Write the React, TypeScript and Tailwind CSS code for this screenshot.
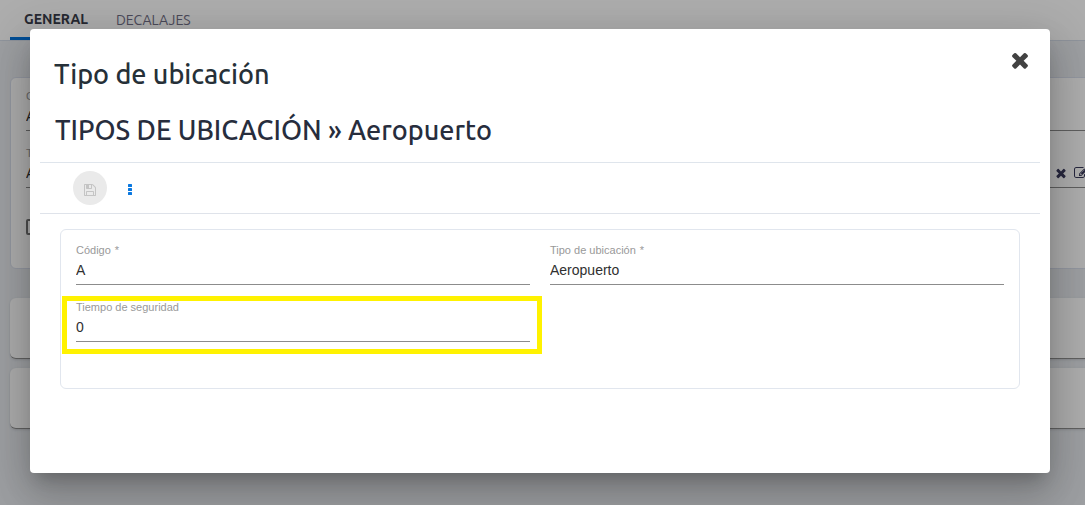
import { useState } from "react";

interface FieldProps {
  id: string;
  label: string;
  value: string;
  required?: boolean;
  children?: React.ReactNode;
}

interface IconProps {
  path: string;
  className?: string;
}

const icons = {
  times:
    "M1490 1322q0 40-28 68l-136 136q-28 28-68 28t-68-28l-294-294-294 294q-28 28-68 28t-68-28l-136-136q-28-28-28-68t28-68l294-294-294-294q-28-28-28-68t28-68l136-136q28-28 68-28t68 28l294 294 294-294q28-28 68-28t68 28l136 136q28 28 28 68t-28 68l-294 294 294 294q28 28 28 68z",
  save: "M512 1536h768v-384h-768v384zm896 0h128v-896q0-14-10-38.5t-20-34.5l-281-281q-10-10-34-20t-39-10v416q0 40-28 68t-68 28h-576q-40 0-68-28t-28-68v-416h-128v1280h128v-416q0-40 28-68t68-28h832q40 0 68 28t28 68v416zm-384-928v-320q0-13-9.5-22.5t-22.5-9.5h-192q-13 0-22.5 9.5t-9.5 22.5v320q0 13 9.5 22.5t22.5 9.5h192q13 0 22.5-9.5t9.5-22.5zm640 32v928q0 40-28 68t-68 28h-1344q-40 0-68-28t-28-68v-1344q0-40 28-68t68-28h928q40 0 88 20t76 48l280 280q28 28 48 76t20 88z",
  edit: "M888 1184l116-116-152-152-116 116v56h96v96h56zm440-720q-16-16-33 1l-350 350q-17 17-1 33t33-1l350-350q17-17 1-33zm80 594v190q0 119-84.5 203.5t-203.5 84.5h-832q-119 0-203.5-84.5t-84.5-203.5v-832q0-119 84.5-203.5t203.5-84.5h832q63 0 117 25 15 7 18 23 3 17-9 29l-49 49q-14 14-32 8-23-6-45-6h-832q-66 0-113 47t-47 113v832q0 66 47 113t113 47h832q66 0 113-47t47-113v-126q0-13 9-22l64-64q15-15 35-7t20 29zm-96-738l288 288-672 672h-288v-288zm444 132l-92 92-288-288 92-92q28-28 68-28t68 28l152 152q28 28 28 68t-28 68z",
};

function Icon({ path, className }: IconProps) {
  return (
    <svg viewBox="0 0 1792 1792" fill="currentColor" className={className} aria-hidden="true">
      <path d={path} />
    </svg>
  );
}

function Field({ id, label, value, required, children }: FieldProps) {
  const [text, setText] = useState(value);

  return (
    <div className="relative flex flex-col font-['Liberation_Sans',Arial,sans-serif]">
      <label htmlFor={id} className="text-[11px] leading-3 text-[#999999]">
        {label}
        {required && <span className="ml-1">*</span>}
      </label>
      <div className="flex items-center gap-1.5 border-b border-[#8c8c8c] pt-1 pb-1">
        <input
          id={id}
          value={text}
          onChange={(e) => setText(e.target.value)}
          className="h-5 min-w-0 flex-1 bg-transparent text-sm leading-5 text-[#303030] outline-none"
        />
        {children}
      </div>
    </div>
  );
}

// Page behind the dialog, wider than the window and cut at its right edge
function LocationPage() {
  return (
    <div className="w-[calc(100%+32px)]">
      <nav className="flex h-[41px] border-b border-[#d3dbe6] bg-white pl-2.5 text-sm">
        <button className="border-b-3 border-[#0073dd] px-3.5 font-bold text-[#3a3d4a]">GENERAL</button>
        <button className="px-3.5 text-[#6f6d84]">DECALAJES</button>
      </nav>

      <main className="flex flex-col pt-9 pl-2.5">
        <section className="flex h-48 flex-col gap-4 rounded-md border border-[#d9dfec] bg-white pt-3 pr-7 pl-[15px]">
          <Field id="page-code" label="Código" value="A" required />
          <Field id="page-type" label="Tipo de ubicación" value="Aeropuerto" required>
            <button aria-label="Borrar" className="text-[#3a3a5c]">
              <Icon path={icons.times} className="size-3.5" />
            </button>
            <button aria-label="Editar" className="text-[#3a3a5c]">
              <Icon path={icons.edit} className="size-3.5" />
            </button>
          </Field>
          <input
            type="checkbox"
            aria-label="Activo"
            className="mt-[15px] size-4 appearance-none rounded-xs border-2 border-[#757575]"
          />
        </section>
        <section className="mt-[29px] h-[61px] rounded-md border-b border-[#8f8f8f] bg-white shadow-sm" />
        <section className="mt-[9px] h-[61px] rounded-md border-b border-[#8f8f8f] bg-white shadow-sm" />
      </main>
    </div>
  );
}

export default function App() {
  return (
    <div className="relative min-h-screen overflow-hidden bg-[#e7eaef] font-[Ubuntu,'Noto_Sans',sans-serif]">
      <LocationPage />

      <div className="absolute inset-0 flex items-start bg-black/32 pt-[29px] pr-[35px] pl-[30px]">
        <div
          role="dialog"
          aria-modal="true"
          aria-labelledby="dialog-title"
          className="flex-1 rounded bg-white px-2.5 pb-[84px] shadow-[0_11px_15px_-7px_rgba(0,0,0,0.2),0_24px_38px_3px_rgba(0,0,0,0.14),0_9px_46px_8px_rgba(0,0,0,0.12)]"
        >
          <header className="flex items-start justify-between pr-2 pl-3.5">
            <h2 id="dialog-title" className="pt-[27px] text-[27px] leading-9 font-medium text-[#263038]">
              Tipo de ubicación
            </h2>
            <button aria-label="Cerrar" className="pt-[19px] text-[#424242]">
              <Icon path={icons.times} className="size-6" />
            </button>
          </header>

          <h1 className="mt-5 border-b border-[#dfe5ec] pb-3.5 pl-[15px] text-[27px] leading-9 font-medium text-[#272d3d]">
            TIPOS DE UBICACIÓN » Aeropuerto
          </h1>

          <div className="flex h-[51px] items-center gap-3.5 border-b border-[#dfe3ea] pl-[33px]">
            <button
              disabled
              aria-label="Guardar"
              className="flex size-[34px] items-center justify-center rounded-full bg-[#eaeaea] text-[#c4c4c4]"
            >
              <Icon path={icons.save} className="mt-1 size-3.5" />
            </button>
            <button aria-label="Más opciones" className="flex w-[18px] justify-center pt-0.5 text-[#0a78e0]">
              <svg viewBox="0 0 4 11" fill="currentColor" className="h-[11px] w-1" aria-hidden="true">
                <rect width="4" height="3" rx="0.5" />
                <rect y="4" width="4" height="3" rx="0.5" />
                <rect y="8" width="4" height="3" rx="0.5" />
              </svg>
            </button>
          </div>

          <form className="mx-5 mt-[15px] grid grid-cols-2 gap-x-5 gap-y-4 rounded-md border border-[#e1e6ee] px-[15px] pt-3.5 pb-[46px]">
            <Field id="code" label="Código" value="A" required />
            <Field id="type" label="Tipo de ubicación" value="Aeropuerto" required />
            <div className="relative">
              <Field id="security-time" label="Tiempo de seguridad" value="0" />
              <div className="pointer-events-none absolute -top-[5px] -right-3 -bottom-3 -left-3.5 border-5 border-[#fff200]" />
            </div>
          </form>
        </div>
      </div>
    </div>
  );
}
